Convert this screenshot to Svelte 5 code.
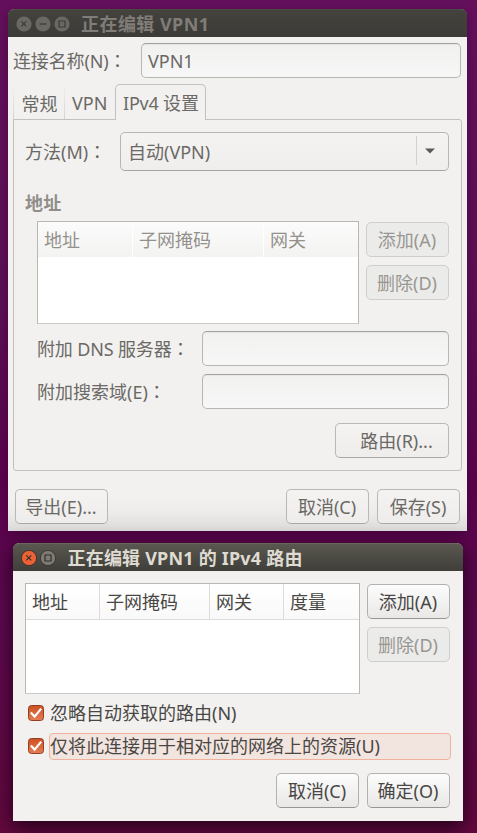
<script>
  const columns = ['地址', '子网掩码', '网关'];
  const routeColumns = ['地址', '子网掩码', '网关', '度量'];
  const options = ['忽略自动获取的路由(N)', '仅将此连接用于相对应的网络上的资源(U)'];
</script>

{#snippet control(kind)}
  <svg class="control" width="16" height="16" viewBox="0 0 16 16">
    <circle class={kind} cx="8" cy="8" r="7.6" />
    {#if kind.includes('close')}
      <path d="M5.3 5.3l5 5M10.3 5.3l-5 5" />
    {:else if kind.includes('min')}
      <path d="M4.5 8h7" />
    {:else}
      <path d="M5 5h6v6H5z" />
    {/if}
  </svg>
{/snippet}

<div class="desktop">
  <section class="window back">
    <header class="titlebar">
      <div class="controls">
        {@render control('close')}
        {@render control('min')}
        {@render control('max')}
      </div>
      <h1>正在编辑 VPN1</h1>
    </header>
    <div class="name-row">
      <label for="name">连接名称(N)<i>：</i></label>
      <div class="entry" id="name">VPN1</div>
    </div>
    <nav class="tabs">
      <span class="tab first">常规</span>
      <span class="tab vpn">VPN</span>
      <span class="tab active">IPv4 设置</span>
    </nav>
    <div class="page">
      <div class="method-row">
        <span class="label">方法(M)<i>：</i></span>
        <div class="combo">
          <span>自动(VPN)</span>
          <div class="arrow"><svg width="10" height="6" viewBox="0 0 10 6"><path d="M0 .5h10L5 5.5z" /></svg></div>
        </div>
      </div>
      <h2>地址</h2>
      <div class="list-row">
        <div class="table">
          <div class="thead">
            {#each columns as c}<span>{c}</span>{/each}
          </div>
        </div>
        <div class="side">
          <div class="button off">添加(A)</div>
          <div class="button off">删除(D)</div>
        </div>
      </div>
      <div class="field dns"><span>附加 DNS 服务器<i>：</i></span><div class="entry"></div></div>
      <div class="field"><span>附加搜索域(E)<i>：</i></span><div class="entry"></div></div>
      <div class="routes"><div class="button">路由(R)...</div></div>
    </div>
    <footer>
      <div class="button export">导出(E)...</div>
      <div class="button">取消(C)</div>
      <div class="button">保存(S)</div>
    </footer>
  </section>

  <section class="window front">
    <header class="titlebar">
      <div class="controls">
        {@render control('close hot')}
        {@render control('max lit')}
      </div>
      <h1>正在编辑 VPN1 的 IPv4 路由</h1>
    </header>
    <div class="list-row">
      <div class="table">
        <div class="thead">
          {#each routeColumns as c}<span>{c}</span>{/each}
        </div>
      </div>
      <div class="side">
        <div class="button">添加(A)</div>
        <div class="button off">删除(D)</div>
      </div>
    </div>
    <div class="checks">
      {#each options as text, n}
        <div class="check">
          <svg width="16" height="16" viewBox="0 0 16 16">
            <defs>
              <linearGradient id="box{n}" x2="0" y2="1">
                <stop offset="0" stop-color="#cf4f20" />
                <stop offset="1" stop-color="#e27e56" />
              </linearGradient>
            </defs>
            <rect x=".5" y=".5" width="15" height="15" rx="3" fill="url(#box{n})" stroke="#963f20" />
            <path d="M2.8 7.6l3.8 4L13.2 3.6" fill="none" stroke="#fff" stroke-width="2.2" />
          </svg>
          <span class="text" class:focus={n === 1}>{text}</span>
        </div>
      {/each}
    </div>
    <footer>
      <div class="button">取消(C)</div>
      <div class="button">确定(O)</div>
    </footer>
  </section>
</div>

<style>
  * { box-sizing: border-box; }
  .desktop {
    position: relative;
    width: 477px;
    height: 833px;
    overflow: hidden;
    background: linear-gradient(180deg, #65105d 0, #5d0f56 35%, #5a034d 58%, #600951 75%, #65083f 100%);
    font: 18px/26px "Noto Sans", "Noto Sans CJK SC", sans-serif;
    white-space: nowrap;
  }
  i { font-family: "Noto Sans CJK TC", sans-serif; font-style: normal; }
  .window {
    position: absolute;
    display: flex;
    flex-direction: column;
    background: #f2f1f0;
    border-radius: 7px 7px 0 0;
  }
  .back {
    left: 8px; top: 9px; width: 459px; height: 522px;
    color: #6b6965;
    box-shadow: 0 3px 12px #30002c80;
  }
  .front {
    left: 13px; top: 543px; width: 450px; height: 278px;
    color: #494744;
    box-shadow: 0 6px 20px 1px #140010d0;
  }
  .titlebar {
    flex: none;
    height: 28px;
    display: flex;
    align-items: center;
    padding-left: 7.5px;
    border-radius: 6px 6px 0 0;
    background: linear-gradient(#43423d, #3c3b37);
    border-top: 1px solid #4b4a44;
    color: #807d78;
  }
  .front .titlebar {
    background: linear-gradient(#59574f, #3f3e39);
    border-top-color: #6a675d;
    color: #dfdbd2;
  }
  .controls { display: flex; gap: 3px; }
  .control { display: block; }
  .control circle { fill: #6a6862; }
  .control path { fill: none; stroke: #3c3b37; stroke-width: 1.2; }
  .control circle.hot { fill: #ec6237; stroke: #3a2b24; stroke-width: .8; }
  .control circle.lit { fill: #7d7b74; stroke: #33322e; stroke-width: .8; }
  .front .control path { stroke: #34302c; }
  h1, h2 { margin: 0; font-size: 18px; line-height: 26px; font-weight: 700; }
  h1 { margin-left: 11.5px; letter-spacing: .45px; }
  .front h1 { letter-spacing: .2px; margin-left: 12px; }
  .entry {
    height: 35px;
    border: 1px solid #b6b6b3;
    border-top-color: #a2a3a1;
    border-radius: 5px;
    background: linear-gradient(#f1f1f0, #f7f7f7);
    box-shadow: inset 0 1px 1px #0000000c;
    padding: 4px 6px;
  }
  .name-row { display: flex; height: 48px; padding: 6px 6px 0 5px; }
  .name-row label { width: 128px; padding-top: 4px; letter-spacing: -.15px; }
  .name-row .entry { flex: 1; }
  .tabs { display: flex; height: 34px; margin: 0 5px; align-items: flex-end; }
  .tab { height: 32px; padding: 4px 0 0 7.5px; }
  .first { width: 52px; border: solid #dededb; border-width: 0 1px; border-image: linear-gradient(#f2f1f0, #d3d2d0) 1; }
  .vpn { width: 50px; padding: 3px 0 0 7px; }
  .active {
    position: relative;
    z-index: 1;
    width: 91px; height: 36px;
    margin-bottom: -1px;
    padding: 5px 0 0 7px;
    letter-spacing: -.2px;
    border: 1px solid #c2c1be;
    border-bottom: 0;
    border-radius: 5px 5px 0 0;
    background: #f2f1f0;
  }
  .page {
    height: 352px;
    margin: 0 5px;
    padding: 12px 12px 0 11px;
    border: 1px solid #c2c1be;
    border-radius: 0 3px 3px 3px;
  }
  .method-row { display: flex; }
  .method-row .label { width: 95px; padding-top: 6px; }
  .combo {
    display: flex;
    flex: 1;
    height: 39px;
    border: 1px solid #b7b6b4;
    border-bottom-color: #a6a5a3;
    border-radius: 5px;
    padding: 6px 0 0 7px;
    background: linear-gradient(#f4f3f2, #efeeed);
  }
  .combo span { flex: 1; }
  .arrow { width: 32px; height: 29px; margin-top: -3px; border-left: 1px solid #d2d1cf; padding: 1px 0 0 8px; }
  .arrow svg { display: block; margin-top: 11px; }
  .arrow path { fill: #5c5b58; }
  h2 { margin-top: 19px; height: 31px; color: #918e89; letter-spacing: .3px; }
  .list-row { display: flex; justify-content: space-between; }
  .back .list-row { padding-left: 12px; }
  .table { border: 1px solid #b8b7b4; border-bottom-color: #cbcac8; background: #fff; }
  .back .table { width: 322px; height: 103px; }
  .thead { display: flex; height: 35px; background: linear-gradient(#fbfbfb, #f3f3f2); }
  .thead span { padding: 5px 0 0 6px; border-right: 1px solid #fff; }
  .back .thead { color: #94918c; }
  .back .thead span:nth-child(1) { width: 95px; }
  .back .thead span:nth-child(2) { width: 131px; }
  .thead span:last-child { flex: 1; border-right: 0; }
  .side { display: flex; flex-direction: column; gap: 8px; padding-top: 1px; }
  .button {
    flex: none;
    width: 83px;
    height: 35px;
    border: 1px solid #b9b8b5;
    border-bottom-color: #a9a8a5;
    border-radius: 5px;
    background: linear-gradient(#f4f3f2, #eeedec);
    text-align: center;
    padding: 4px 1px 0 0;
  }
  .front .button { background: linear-gradient(#fcfcfc, #e9e8e7); border-color: #b2b1ae; border-bottom-color: #979693; }
  .button.off, .front .button.off { background: #ebebea; border-color: #cfceca; color: #999691; }
  .field { display: flex; justify-content: space-between; padding-left: 12px; margin-top: 8px; }
  .field span { padding-top: 4px; }
  .field.dns { margin-top: 7px; }
  .field.dns span { letter-spacing: -.15px; }
  .field .entry { width: 247px; }
  .routes { display: flex; justify-content: flex-end; margin-top: 14px; }
  .routes .button { width: 114px; padding-left: 10px; }
  footer { display: flex; justify-content: flex-end; gap: 8px; }
  .back footer {
    height: 60px;
    padding: 18px 7px 0;
    background: linear-gradient(transparent 25px, #00000006 42px, #00000018);
  }
  .export { width: 93px; margin-right: auto; }
  .front .list-row { padding: 12px 13px 0 12px; }
  .front .table { width: 335px; height: 111px; }
  .front .thead { height: 36px; background: linear-gradient(#fff, #f9f9f9); border-bottom: 1px solid #dddcda; }
  .front .thead span { border-color: #dddcda; padding-top: 5px; }
  .front .thead span:nth-child(1) { width: 74px; }
  .front .thead span:nth-child(2) { width: 110px; }
  .front .thead span:nth-child(3) { width: 74px; }
  .front .thead span:last-child { border: 0; }
  .checks { display: flex; flex-direction: column; gap: 6px; padding: 6px 12px 0 15px; }
  .check { display: flex; align-items: flex-start; gap: 5px; height: 27px; }
  .check svg { flex: none; display: block; margin-top: 5px; }
  .text { flex: 1; height: 27px; border: 1px solid transparent; border-radius: 4px; line-height: 25px; }
  .focus { background: #f2e4df; border-color: #f1b29d; }
  .front footer { padding: 13px 13px 0; }
</style>
